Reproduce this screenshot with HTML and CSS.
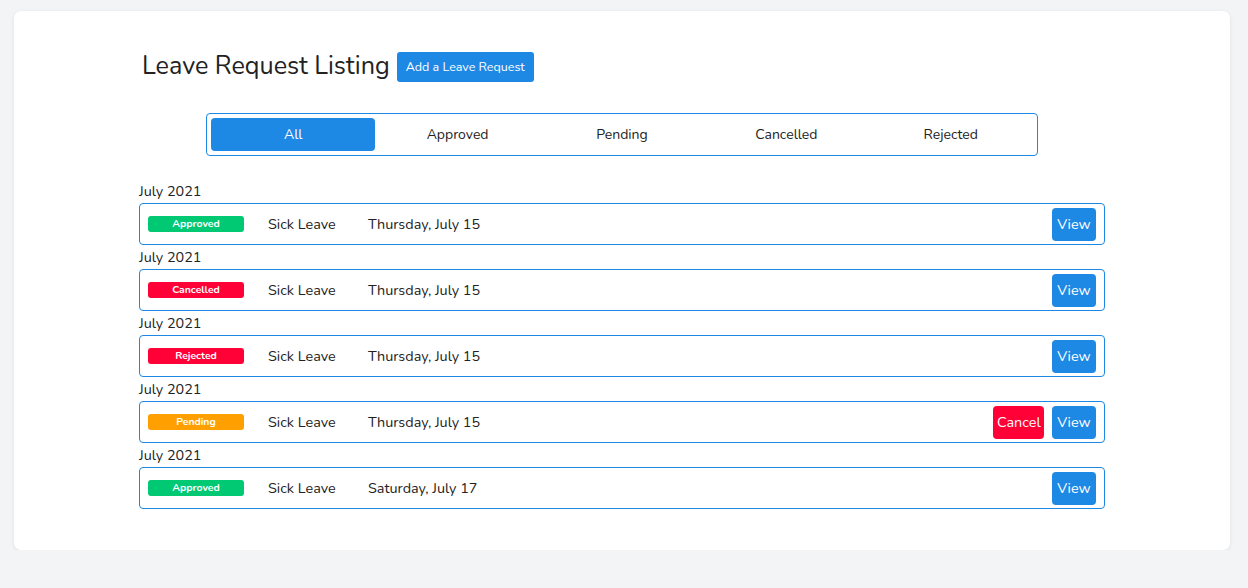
FILE: index.html
```html
<!DOCTYPE html>
<html>
<head>
<meta charset="utf-8">
<link rel="stylesheet" href="styles.css">
</head>
<body>
<div class="card">
  <div class="header">
    <h1 class="title">Leave Request Listing</h1>
    <button class="btn btn-add">Add a Leave Request</button>
  </div>
  <div class="tabs">
    <div class="tab active">All</div>
    <div class="tab">Approved</div>
    <div class="tab">Pending</div>
    <div class="tab">Cancelled</div>
    <div class="tab">Rejected</div>
  </div>
  <div class="list">
    <div class="month">July 2021</div>
    <div class="row">
      <span class="badge approved">Approved</span>
      <span class="type">Sick Leave</span>
      <span class="date">Thursday, July 15</span>
      <div class="actions"><button class="btn btn-view">View</button></div>
    </div>
    <div class="month">July 2021</div>
    <div class="row">
      <span class="badge cancelled">Cancelled</span>
      <span class="type">Sick Leave</span>
      <span class="date">Thursday, July 15</span>
      <div class="actions"><button class="btn btn-view">View</button></div>
    </div>
    <div class="month">July 2021</div>
    <div class="row">
      <span class="badge rejected">Rejected</span>
      <span class="type">Sick Leave</span>
      <span class="date">Thursday, July 15</span>
      <div class="actions"><button class="btn btn-view">View</button></div>
    </div>
    <div class="month">July 2021</div>
    <div class="row">
      <span class="badge pending">Pending</span>
      <span class="type">Sick Leave</span>
      <span class="date">Thursday, July 15</span>
      <div class="actions"><button class="btn btn-cancel">Cancel</button><button class="btn btn-view">View</button></div>
    </div>
    <div class="month">July 2021</div>
    <div class="row">
      <span class="badge approved">Approved</span>
      <span class="type">Sick Leave</span>
      <span class="date">Saturday, July 17</span>
      <div class="actions"><button class="btn btn-view">View</button></div>
    </div>
  </div>
</div>
</body>
</html>
```
FILE: styles.css
```css
* { box-sizing: border-box; }
html, body { margin: 0; padding: 0; }
body {
  background: #f3f4f6;
  font-family: "Nunito", "Lato", "Noto Sans", sans-serif;
  color: #222;
  padding: 11px 18px 0 14px;
}
.card {
  background: #fff;
  border-radius: 7px;
  box-shadow: 0 1px 4px rgba(0,0,0,0.08);
  padding: 41px 125px 40px 125px;
  height: 539px;
}
.header {
  display: flex;
  align-items: center;
  gap: 7px;
  padding-left: 3px;
  height: 30px;
}
.title {
  margin: 0 0 3px 0;
  font-weight: 400;
  font-size: 25.2px;
  color: #222;
  line-height: 30px;
}
.btn {
  font-family: inherit;
  border: none;
  color: #fff;
  cursor: pointer;
}
.btn-add {
  background: #1e88e5;
  font-size: 12.5px;
  height: 30px;
  padding: 0 9px 1px;
  border-radius: 3px;
}
.tabs {
  margin: 31px auto 0;
  width: 832px;
  height: 43px;
  border: 1px solid #1e88e5;
  border-radius: 4px;
  padding: 4px;
  display: grid;
  grid-template-columns: repeat(5, 1fr);
}
.tab {
  display: flex;
  align-items: center;
  justify-content: center;
  font-size: 14px;
  color: #222;
  border-radius: 4px;
}
.tab.active {
  background: #1e88e5;
  color: #fff;
}
.list {
  margin-top: 23px;
}
.month {
  font-size: 14.4px;
  line-height: 24px;
  height: 24px;
}
.row {
  height: 42px;
  border: 1px solid #1e88e5;
  border-radius: 4px;
  display: flex;
  align-items: center;
  padding: 0 8px;
  font-size: 14.4px;
}
.badge {
  width: 96px;
  height: 16px;
  border-radius: 3px;
  color: #fff;
  font-size: 10.4px;
  font-weight: 700;
  display: flex;
  align-items: center;
  justify-content: center;
  padding-bottom: 2px;
  margin-right: 24px;
}
.approved { background: #00c873; }
.cancelled, .rejected { background: #ff0037; }
.pending { background: #ff9f00; }
.type { width: 100px; }
.actions {
  margin-left: auto;
  display: flex;
  gap: 8px;
}
.btn-view, .btn-cancel {
  height: 33px;
  border-radius: 4px;
  font-size: 14.4px;
  padding: 0 4px;
}
.btn-view { background: #1e88e5; width: 44px; }
.btn-cancel { background: #ff0037; width: 51px; }
```
